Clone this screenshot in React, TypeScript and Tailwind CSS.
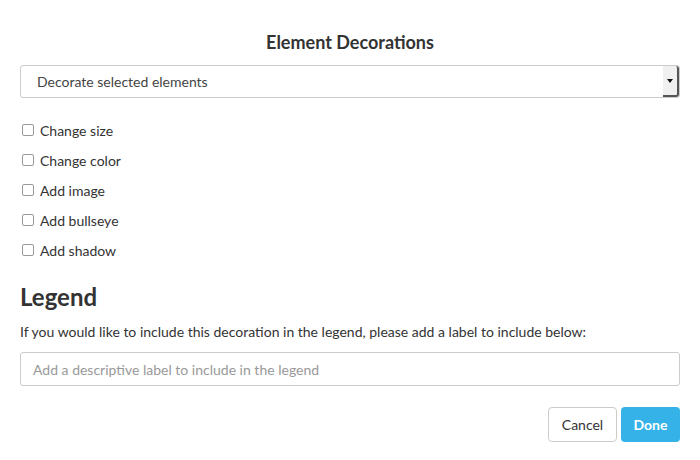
import React from "react";

const items = ["Change size", "Change color", "Add image", "Add bullseye", "Add shadow"];

export default function App() {
  return (
    <div className="w-[700px] h-[460px] bg-white px-5 text-[#333]" style={{ fontFamily: "Lato, 'Open Sans', sans-serif" }}>
      <h1 className="pt-[31px] text-center text-[18px] font-bold leading-[22px] text-[#333]">Element Decorations</h1>
      <div className="mt-[12px] relative h-[33px] rounded-[3px] border border-[#ccc] bg-white flex items-center">
        <span className="pl-[16px] text-[14px] text-[#444]">Decorate selected elements</span>
        <div className="absolute right-0 top-0 bottom-0 w-[16px] bg-[#f0f0f0] border-r-2 border-b-2 border-[#555] rounded-r-[3px] flex items-center justify-center">
          <svg width="6" height="4" viewBox="0 0 6 4"><path d="M0 0 L6 0 L3 4 Z" fill="#111" /></svg>
        </div>
      </div>
      <div className="mt-[17px] flex flex-col">
        {items.map((t) => (
          <label key={t} className="h-[30px] flex items-center gap-[6px] text-[14px] text-[#333]">
            <span className="ml-[2px] w-[12px] h-[12px] rounded-[2px] border border-[#999] bg-white" />
            {t}
          </label>
        ))}
      </div>
      <h2 className="mt-[17px] text-[24px] font-bold leading-[30px] text-[#333]">Legend</h2>
      <p className="mt-[11px] text-[14px] leading-[18px] text-[#333]">
        If you would like to include this decoration in the legend, please add a label to include below:
      </p>
      <div className="mt-[11px] h-[34px] rounded-[3px] border border-[#ccc] flex items-center pl-[12px] text-[14px] text-[#999]">
        Add a descriptive label to include in the legend
      </div>
      <div className="mt-[21px] flex justify-end gap-[4px]">
        <button className="h-[35px] w-[69px] rounded-[4px] border border-[#ccc] bg-white text-[14px] text-[#333]">Cancel</button>
        <button className="h-[35px] w-[59px] rounded-[4px] bg-[#35b3e9] text-[14px] font-bold text-white">Done</button>
      </div>
    </div>
  );
}
